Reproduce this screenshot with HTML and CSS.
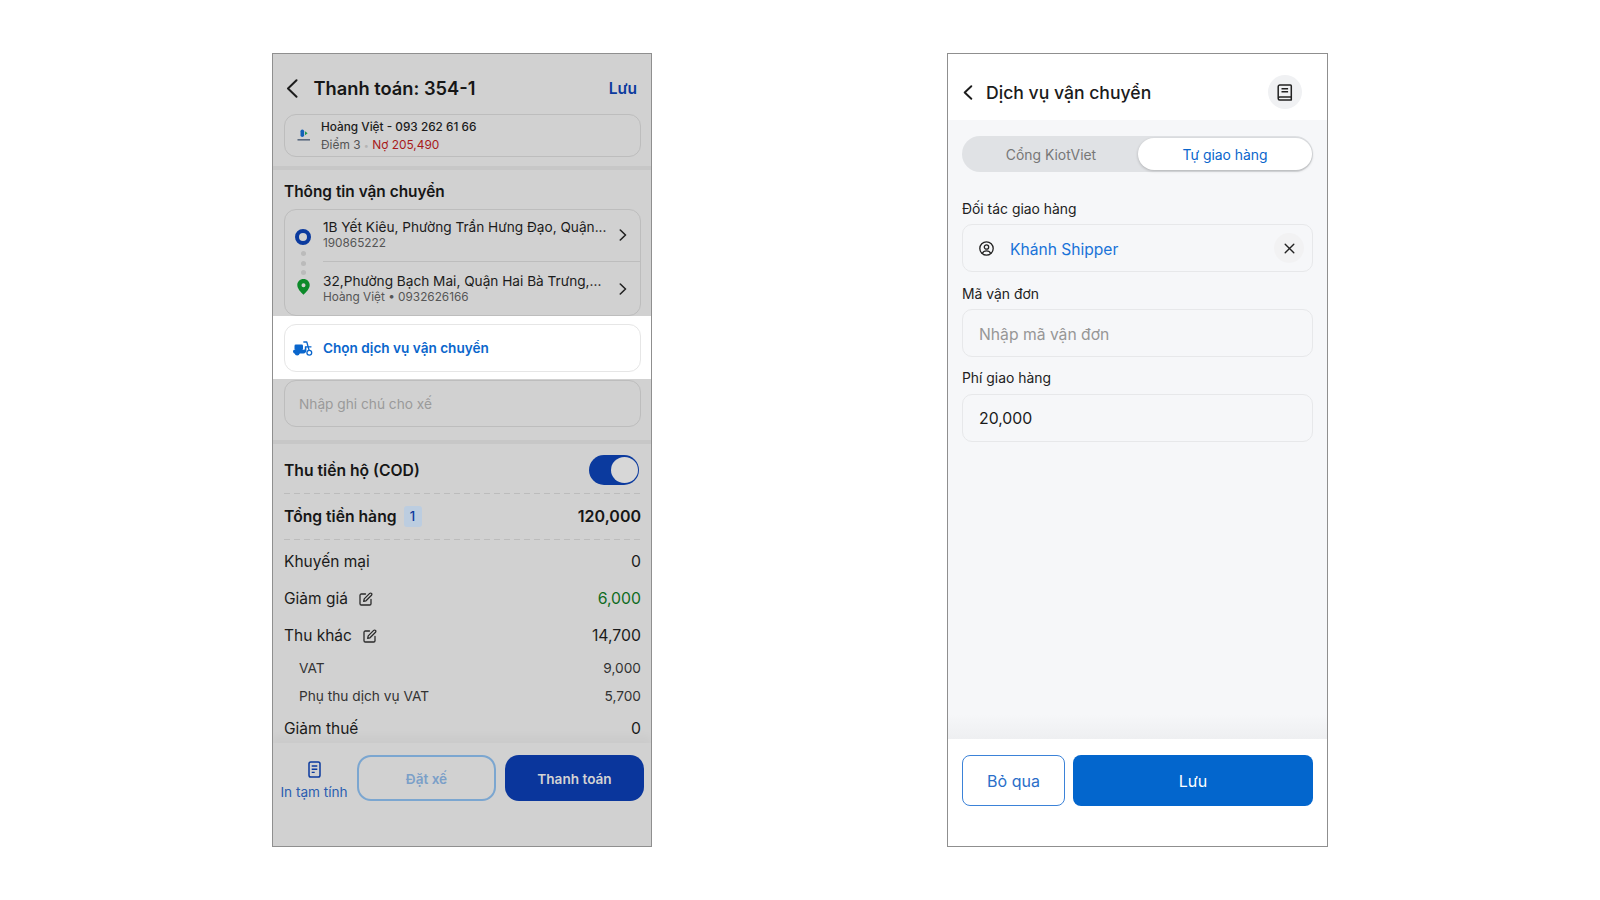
FILE: index.html
```html
<!DOCTYPE html>
<html lang="vi">
<head>
<meta charset="utf-8">
<title>Thanh toán</title>
<link rel="stylesheet" href="styles.css">
</head>
<body>
<main class="stage">
  <section class="phone phone-dim">
    <header class="pay-head">
      <svg class="back" width="12" height="19" viewBox="0 0 12 19"><path d="M10.5 1.2 2 9.5l8.5 8.3" fill="none" stroke="#1c1c1c" stroke-width="2" stroke-linecap="round" stroke-linejoin="round"/></svg>
      <h1 class="pay-title">Thanh toán: 354-1</h1>
      <span class="pay-save">Lưu</span>
    </header>
    <div class="inset">
      <div class="card customer">
        <svg class="logo" width="14" height="13" viewBox="0 0 14 13"><rect x="3.500" y="0.500" width="3.600" height="7.500" rx="1.800" fill="#1261b8"/><path d="M8 2.200 10.600 4.200 8 6.200z" fill="#1f9a4c"/><rect x="0.500" y="10" width="12.500" height="1.600" fill="#5b6b80"/></svg>
        <div class="customer-text">
          <div class="customer-name">Hoàng Việt - 093 262 61 66</div>
          <div class="customer-meta">Điểm 3 <span class="sep">•</span> <span class="debt">Nợ 205,490</span></div>
        </div>
      </div>
    </div>
    <div class="band band-a"></div>
    <div class="inset">
      <h2 class="ship-title">Thông tin vận chuyển</h2>
      <div class="card route">
        <div class="route-marks">
          <span class="ring"></span>
          <span class="dot"></span><span class="dot"></span><span class="dot"></span>
          <svg class="pin" width="13" height="16" viewBox="0 0 13 16"><path fill-rule="evenodd" d="M6.500 0C2.900 0 .3 2.700.3 6.100c0 3.700 3.600 7.400 6.200 9.700 2.600-2.300 6.200-6 6.200-9.700C12.700 2.700 10.100 0 6.500 0zm0 4.300a2 2 0 1 1 0 4 2 2 0 0 1 0-4z" fill="#0c8a2a"/></svg>
        </div>
        <div class="route-rows">
          <div class="route-row route-row-first">
            <div class="route-text">
              <div class="route-main">1B Yết Kiêu, Phường Trần Hưng Đạo, Quận...</div>
              <div class="route-sub">190865222</div>
            </div>
            <svg class="chev" width="8" height="12" viewBox="0 0 8 12"><path d="M1.300 1 6.500 6l-5.200 5" fill="none" stroke="#222" stroke-width="1.600" stroke-linecap="round" stroke-linejoin="round"/></svg>
          </div>
          <div class="route-row route-row-last">
            <div class="route-text">
              <div class="route-main">32,Phường Bạch Mai, Quận Hai Bà Trưng,...</div>
              <div class="route-sub">Hoàng Việt • 0932626166</div>
            </div>
            <svg class="chev" width="8" height="12" viewBox="0 0 8 12"><path d="M1.300 1 6.500 6l-5.200 5" fill="none" stroke="#222" stroke-width="1.600" stroke-linecap="round" stroke-linejoin="round"/></svg>
          </div>
        </div>
      </div>
    </div>
    <div class="highlight">
      <div class="service">
        <svg class="scooter" width="20" height="15" viewBox="0 0 20 15">
          <g fill="#0a66cc"><rect x="1.500" y="3.600" width="8.500" height="5.400" rx="1.300"/><path d="M0 10.300c0-.9.700-1.500 1.500-1.500h9.200c.7 0 1.100-.5 1.100-1.100V5.800h1.600v3.400c0 1.900-1.200 3.200-3 3.200H1.600C.7 12.400 0 11.400 0 10.300z"/><circle cx="4.200" cy="12.200" r="2.400"/></g>
          <g fill="none" stroke="#0a66cc" stroke-width="1.300" stroke-linecap="round" stroke-linejoin="round"><path d="M10.800 1h3l2.200 8"/><path d="M12.500 5.800h5.500"/><circle cx="16.300" cy="11.800" r="2.400"/></g>
        </svg>
        <span>Chọn dịch vụ vận chuyển</span>
      </div>
    </div>
    <div class="inset">
      <div class="card note">Nhập ghi chú cho xế</div>
    </div>
    <div class="band band-b"></div>
    <div class="inset summary">
      <div class="cod-row">
        <span class="strong">Thu tiền hộ (COD)</span>
        <span class="toggle"><span class="knob"></span></span>
      </div>
      <div class="total-row">
        <span class="total-label"><span class="strong">Tổng tiền hàng</span><span class="badge">1</span></span>
        <span class="strong total-value">120,000</span>
      </div>
      <div class="line"><span>Khuyến mại</span><span class="num">0</span></div>
      <div class="line">
        <span class="line-label">Giảm giá
          <svg class="edit" width="14" height="14" viewBox="0 0 14 14"><path d="M6.500 2H2.300A1.300 1.300 0 0 0 1 3.300v8.400A1.300 1.300 0 0 0 2.300 13h8.400a1.300 1.300 0 0 0 1.300-1.300V7.500M4.700 9.300l.5-2.400 5.500-5.500a1.200 1.200 0 0 1 1.800 1.800L7 8.800z" fill="none" stroke="#2a2a2a" stroke-width="1.300" stroke-linejoin="round" stroke-linecap="round"/></svg>
        </span>
        <span class="num green">6,000</span>
      </div>
      <div class="line">
        <span class="line-label">Thu khác
          <svg class="edit" width="14" height="14" viewBox="0 0 14 14"><path d="M6.500 2H2.300A1.300 1.300 0 0 0 1 3.300v8.400A1.300 1.300 0 0 0 2.300 13h8.400a1.300 1.300 0 0 0 1.300-1.300V7.500M4.700 9.300l.5-2.400 5.500-5.500a1.200 1.200 0 0 1 1.800 1.800L7 8.800z" fill="none" stroke="#2a2a2a" stroke-width="1.300" stroke-linejoin="round" stroke-linecap="round"/></svg>
        </span>
        <span class="num">14,700</span>
      </div>
      <div class="subline"><span>VAT</span><span>9,000</span></div>
      <div class="subline"><span>Phụ thu dịch vụ VAT</span><span>5,700</span></div>
      <div class="line"><span>Giảm thuế</span><span class="num">0</span></div>
    </div>
    <footer class="pay-foot">
      <div class="print">
        <svg width="13" height="17" viewBox="0 0 13 17"><rect x="1" y="1" width="11" height="15" rx="1.800" fill="none" stroke="#0b3a9e" stroke-width="1.500"/><path d="M3.700 5h5.600M3.700 8.200h5.600M3.700 11.400h3" stroke="#0b3a9e" stroke-width="1.400" fill="none"/></svg>
        <span>In tạm tính</span>
      </div>
      <button class="btn-ghost" type="button">Đặt xế</button>
      <button class="btn-pay" type="button">Thanh toán</button>
    </footer>
  </section>

  <section class="phone phone-light">
    <header class="ship-head">
      <svg class="back-small" width="10" height="15" viewBox="0 0 10 15"><path d="M8.300 1.200 1.700 7.500l6.600 6.300" fill="none" stroke="#1c1c1c" stroke-width="1.900" stroke-linecap="round" stroke-linejoin="round"/></svg>
      <h1 class="ship-head-title">Dịch vụ vận chuyển</h1>
      <span class="round-btn">
        <svg width="16" height="17" viewBox="0 0 16 17"><path d="M1.200 14.200V2.700A1.700 1.700 0 0 1 2.900 1h10.500c.5 0 .9.400.9.900V13H2.700a1.500 1.500 0 0 0-1.500 1.500 1.500 1.500 0 0 0 1.500 1.500h11.600v-3" fill="none" stroke="#222" stroke-width="1.500" stroke-linejoin="round"/><path d="M4.500 4.700h6.600M4.500 7.800h6.600" stroke="#222" stroke-width="1.400"/></svg>
      </span>
    </header>
    <div class="ship-body">
      <div class="segment">
        <span class="seg-item seg-idle">Cổng KiotViet</span>
        <span class="seg-item seg-active">Tự giao hàng</span>
      </div>
      <label class="field-label label-first">Đối tác giao hàng</label>
      <div class="field field-partner">
        <svg class="person" width="15" height="15" viewBox="0 0 15 15"><circle cx="7.500" cy="7.500" r="6.700" fill="none" stroke="#222" stroke-width="1.300"/><circle cx="7.500" cy="6" r="2.200" fill="none" stroke="#222" stroke-width="1.300"/><path d="M3.300 12.400c.7-1.700 2.300-2.500 4.200-2.500s3.500.8 4.200 2.500" fill="none" stroke="#222" stroke-width="1.300"/></svg>
        <span class="partner-name">Khánh Shipper</span>
        <span class="clear">
          <svg width="11" height="11" viewBox="0 0 11 11"><path d="M1.200 1.200l8.600 8.600M9.800 1.200l-8.600 8.600" stroke="#222" stroke-width="1.400" stroke-linecap="round"/></svg>
        </span>
      </div>
      <label class="field-label">Mã vận đơn</label>
      <div class="field field-placeholder">Nhập mã vận đơn</div>
      <label class="field-label label-fee">Phí giao hàng</label>
      <div class="field">20,000</div>
    </div>
    <footer class="ship-foot">
      <button class="btn-skip" type="button">Bỏ qua</button>
      <button class="btn-save" type="button">Lưu</button>
    </footer>
  </section>
</main>
</body>
</html>
```

FILE: styles.css
```css
* { box-sizing: border-box; }
html, body { margin: 0; padding: 0; height: 100%; background: #fff; overflow: hidden; }
body { font-family: Inter, "Liberation Sans", sans-serif; color: #1b1b1b; }
h1, h2 { margin: 0; }
button { font-family: inherit; cursor: pointer; }

.stage { display: flex; padding: 53px 0 0 272px; }
.phone { height: 794px; border: 1px solid #8f8f8f; display: flex; flex-direction: column; overflow: hidden; flex: none; }

/* Left phone */
.phone-dim { width: 380px; background: #d1d1d1; }
.pay-head { height: 60px; padding: 20px 14px 12px 13px; display: flex; align-items: center; flex: none; }
.back { flex: none; }
.pay-title { font-size: 18.300px; font-weight: 600; margin-left: 15.500px; flex: 1; color: #161616; }
.pay-save { font-size: 15.500px; font-weight: 600; color: #0b3a9e; }
.inset { padding: 0 10px 0 11px; flex: none; }
.card { border: 1px solid #bdbdbd; border-radius: 12px; }
.customer { height: 43px; display: flex; align-items: center; padding-left: 12px; }
.logo { flex: none; margin-right: 10px; }
.customer-text { padding-top: 2px; }
.customer-name { font-size: 11.800px; font-weight: 500; line-height: 18px; white-space: nowrap; }
.customer-meta { font-size: 11.900px; line-height: 18px; color: #555; }
.sep { color: #b4b4b4; font-size: 9px; }
.debt { color: #a81a1a; }
.band { background: #c7c7c7; flex: none; height: 4px; }
.band-a { margin-top: 9px; }
.band-b { margin-top: 13px; }
.ship-title { font-size: 15.400px; font-weight: 600; line-height: 20px; margin: 12px 0 7px; color: #161616; }
.route { height: 107px; display: flex; }
.route-marks { width: 38px; flex: none; display: flex; flex-direction: column; align-items: center; padding: 19px 2px 0 0; }
.ring { width: 16px; height: 16px; border: 4px solid #0b3a9e; border-radius: 50%; flex: none; }
.dot { width: 5px; height: 5px; border-radius: 50%; background: #bbb; margin-top: 4.500px; flex: none; }
.ring + .dot { margin-top: 6px; }
.pin { margin-top: 4px; flex: none; }
.route-rows { flex: 1; display: flex; flex-direction: column; }
.route-row { height: 52px; display: flex; align-items: center; border-bottom: 1px solid #bdbdbd; padding-right: 13px; }
.route-row-first { padding-bottom: 2px; }
.route-row-last { border-bottom: 0; height: 54px; }
.route-text { flex: 1; min-width: 0; }
.route-main { font-size: 13.650px; line-height: 18px; white-space: nowrap; }
.route-sub { font-size: 11.800px; line-height: 15px; color: #555; }
.chev { flex: none; margin-top: 1px; }
.highlight { height: 63px; background: #fff; padding: 8px 10px 7px 11px; flex: none; }
.service { height: 48px; border: 1px solid #e6e6e6; border-radius: 12px; display: flex; align-items: center; padding-left: 8px; color: #0a66cc; font-size: 13.600px; font-weight: 600; gap: 10px; }
.scooter { flex: none; }
.note { height: 47px; margin-top: 1px; display: flex; align-items: center; padding-left: 14px; font-size: 13.700px; color: #9a9a9a; }
.summary { flex: 1; min-height: 0; overflow: hidden; }
.strong { font-size: 15.700px; font-weight: 600; color: #161616; }
.total-value { font-size: 16px; }
.cod-row, .total-row { background: linear-gradient(90deg, #bcbcbc 6px, transparent 6px) left bottom / 10px 1px repeat-x; display: flex; justify-content: space-between; align-items: center; }
.cod-row { margin-top: 11px; height: 39px; padding-bottom: 9px; }
.total-row { height: 46px; padding-bottom: 2px; margin-bottom: 3px; }
.toggle { width: 50px; height: 30px; border-radius: 15px; background: #0b3a9e; margin-right: 2px; padding: 2px 1px; display: flex; justify-content: flex-end; flex: none; }
.knob { width: 27px; height: 26px; border-radius: 50%; background: #d7d7d7; }
.total-label { display: flex; align-items: center; gap: 7px; }
.badge { width: 18px; height: 21px; border-radius: 3px; background: #bccde0; color: #0b3a9e; font-size: 13px; font-weight: 500; display: flex; align-items: center; justify-content: center; }
.line { height: 37px; display: flex; justify-content: space-between; align-items: center; font-size: 15.500px; flex: none; }
.num { font-size: 15.800px; }
.line-label { display: flex; align-items: center; gap: 11px; }
.green { color: #0f6b22; }
.subline { height: 28px; display: flex; justify-content: space-between; align-items: center; font-size: 13.700px; padding-left: 15px; color: #333; }
.pay-foot { flex: none; height: 103px; padding: 12px 6px 0 7px; display: flex; align-items: flex-start; gap: 9px; box-shadow: 0 -6px 9px rgba(0,0,0,.035); background: #d1d1d1; position: relative; }
.print { width: 68px; flex: none; display: flex; flex-direction: column; align-items: center; gap: 6px; color: #2a5db0; font-size: 13.600px; white-space: nowrap; padding-top: 6px; }
.btn-ghost, .btn-pay { width: 139px; height: 46px; border-radius: 14px; font-size: 13.600px; font-weight: 600; flex: none; padding-top: 2px; }
.btn-ghost { background: transparent; border: 2px solid #7ba6d0; color: #7b9fc8; }
.btn-pay { background: #0a369c; border: 0; color: #d3d3d3; }

/* Right phone */
.phone-light { width: 381px; margin-left: 295px; background: #fff; }
.ship-head { height: 66px; flex: none; display: flex; align-items: center; padding: 20px 25px 10px 15px; }
.back-small { flex: none; }
.ship-head-title { font-size: 17.600px; font-weight: 500; flex: 1; margin-left: 13px; color: #1b1b1b; }
.round-btn { width: 34px; height: 34px; border-radius: 50%; background: #f0f1f3; display: flex; align-items: center; justify-content: center; flex: none; }
.ship-body { flex: 1; min-height: 0; background: linear-gradient(#f6f7f9 0, #f6f7f9 96%, #eeeff1 100%); padding: 16px 14px 0; }
.segment { height: 36px; border-radius: 18px; background: #e0e2e5; display: flex; align-items: center; padding: 2px 1px 2px 0; }
.seg-item { font-size: 13.900px; color: #777; display: flex; align-items: center; justify-content: center; height: 32px; flex: 1; padding-top: 1px; }
.seg-idle { padding-left: 2px; }
.seg-active { flex: none; width: 174px; background: #fff; color: #0a66cc; border-radius: 16px; box-shadow: 0 1px 3px rgba(0,0,0,.22); }
.field-label { display: block; font-size: 13.900px; line-height: 20px; margin: 12px 0 5px; color: #222; }
.label-first { margin-top: 27px; }
.label-fee { margin: 11px 0 6px; }
.field { height: 48px; border: 1px solid #e7e8ea; border-radius: 10px; display: flex; align-items: center; padding-left: 16px; font-size: 15.800px; color: #1b1b1b; }
.field-partner { padding: 0 8px 0 16px; }
.person { flex: none; margin-right: 16px; }
.partner-name { color: #1a73d8; flex: 1; font-size: 15.600px; padding-top: 2px; }
.clear { width: 30px; height: 30px; border-radius: 50%; background: #f2f2f3; display: flex; align-items: center; justify-content: center; flex: none; }
.field-placeholder { color: #969696; font-size: 15.700px; padding-top: 2px; }
.ship-foot { height: 107px; flex: none; padding: 16px 14px 0; display: flex; align-items: flex-start; gap: 8px; }
.btn-skip, .btn-save { height: 51px; border-radius: 8px; font-size: 16px; }
.btn-skip { width: 103px; flex: none; background: #fff; border: 1px solid #3b82d8; color: #2a6fc9; }
.btn-save { flex: 1; background: #0366cd; border: 0; color: #fff; }
```
